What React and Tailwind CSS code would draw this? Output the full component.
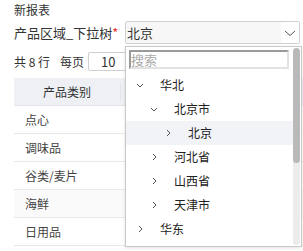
import React from "react";

const font = { fontFamily: '"Noto Sans CJK SC", "Noto Sans", sans-serif' };

// small chevrons used in the tree and the select
const Chevron = ({ open }) => (
  <svg width="8" height="8" viewBox="0 0 8 8" className="block">
    {open ? (
      <polyline points="1,3 4,6 7,3" fill="none" stroke="#555" strokeWidth="1" />
    ) : (
      <polyline points="3,1 6,4 3,7" fill="none" stroke="#555" strokeWidth="1" />
    )}
  </svg>
);

const treeRows = [
  { label: "华北", level: 0, open: true },
  { label: "北京市", level: 1, open: true },
  { label: "北京", level: 2, open: false, active: true },
  { label: "河北省", level: 1, open: false },
  { label: "山西省", level: 1, open: false },
  { label: "天津市", level: 1, open: false },
  { label: "华东", level: 0, open: false },
];

const tableRows = ["点心", "调味品", "谷类/麦片", "海鲜", "日用品"];

const pad = ["pl-[10px]", "pl-[24px]", "pl-[38px]"];

export default function App() {
  return (
    <div className="relative w-[303px] h-[251px] overflow-hidden bg-white text-[12px] text-[#333]" style={font}>
      <div className="pl-[14px]">
        {/* Title */}
        <div className="h-[20px] leading-[20px]">新报表</div>

        {/* Parameter row */}
        <div className="mt-[1px] flex h-[23px] items-center">
          <div className="w-[111px] text-[13px] leading-none">
            产品区域_下拉树<span className="text-[#e4393c]">*</span>
          </div>
          <div className="flex h-[23px] w-[175px] items-center rounded-[2px] border border-[#d0d0d0] bg-[#f7f7f7]">
            <span className="flex-1 pl-[1px] text-[13px] leading-none">北京</span>
            <span className="flex h-full w-[18px] items-center justify-center bg-white">
              <svg width="12" height="8" viewBox="0 0 12 8">
                <polyline points="1,2 6,6.5 11,2" fill="none" stroke="#555" strokeWidth="1" />
              </svg>
            </span>
          </div>
        </div>

        {/* Pager row */}
        <div className="mt-[8px] flex h-[19px] items-center">
          <span>共 8 行</span>
          <span className="ml-[10px]">每页</span>
          <div className="ml-[4px] flex h-[19px] w-[40px] items-center rounded-[2px] border border-[#d0d0d0] pl-[12px] text-[13px]">
            10
          </div>
        </div>

        {/* Table */}
        <div className="mt-[7px] w-[300px]">
          <div className="flex h-[28px] items-center border-b border-[#e2e5e9] bg-[#eef0f3]">
            <div className="w-[106px] text-center">产品类别</div>
            <div className="flex-1 border-l border-[#e2e5e9]">&nbsp;</div>
          </div>
          {tableRows.map((r, i) => (
            <div
              key={r}
              className={`flex h-[28px] items-center border-b border-[#e8e8e8] ${i === 3 ? "bg-[#fafafa]" : "bg-white"}`}
            >
              <div className="w-[106px] pl-[11px] text-[#444]">{r}</div>
            </div>
          ))}
        </div>
      </div>

      {/* Dropdown tree overlay */}
      <div className="absolute left-[125px] top-[46px] flex h-[201px] w-[177px] border border-[#c9c9c9] bg-white shadow-[0_1px_3px_rgba(0,0,0,0.12)]">
        <div className="flex-1">
          <div className="pl-[3px] pt-[3px]">
            <div className="flex h-[19px] w-[160px] items-center border-2 border-[#e2e2e2] border-l-[#9a9a9a] border-t-[#9a9a9a] text-[13px] leading-none text-[#aaa]">
              搜索
            </div>
          </div>
          <div className="mt-[4px]">
            {treeRows.map((row) => (
              <div
                key={row.label}
                className={`flex h-[24px] items-center ${pad[row.level]} ${row.active ? "bg-[#f2f3f7]" : ""}`}
              >
                <span className="w-[8px]">
                  <Chevron open={row.open} />
                </span>
                <span className="ml-[16px] text-[#222]">{row.label}</span>
              </div>
            ))}
          </div>
        </div>
        {/* Scrollbar */}
        <div className="my-[1px] mr-[1px] w-[7px] rounded-[4px] bg-[#ececec]">
          <div className="h-[115px] rounded-[4px] bg-[#b9b9b9]" />
        </div>
      </div>
    </div>
  );
}
